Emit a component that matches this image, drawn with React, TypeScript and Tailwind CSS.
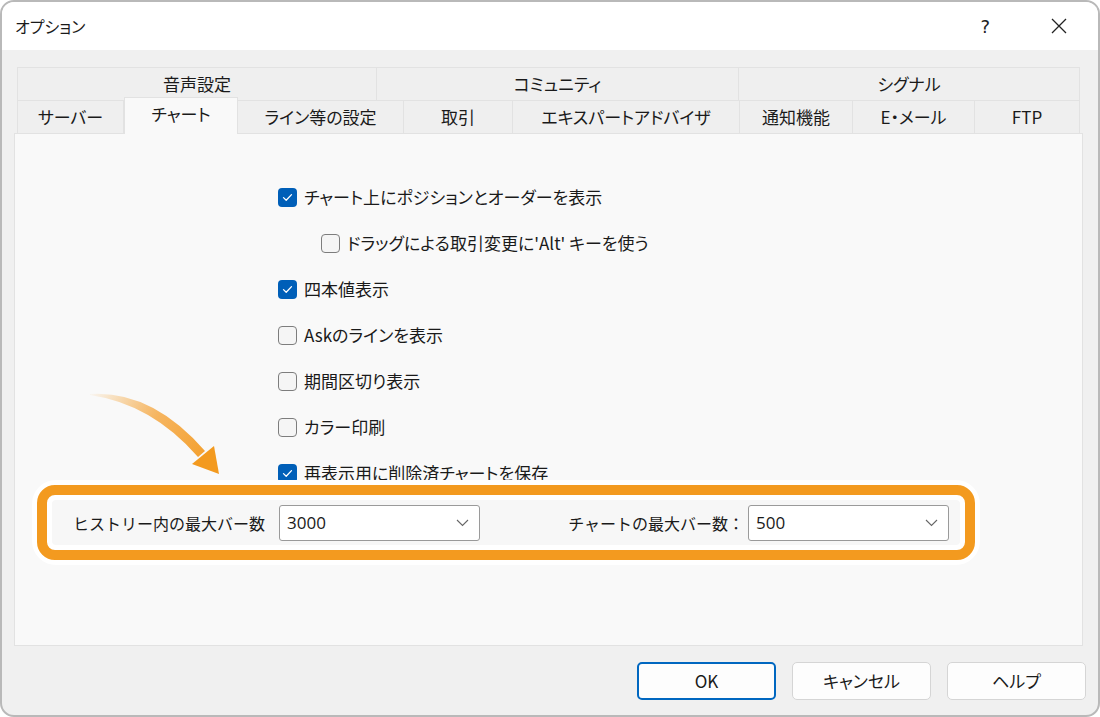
import React from "react";

const JP = "font-['Noto_Sans_CJK_JP','Noto_Sans',sans-serif]";

function CheckBox({ checked }: { checked: boolean }) {
  if (checked) {
    return (
      <span className="flex h-[19px] w-[19px] items-center justify-center rounded-[4px] bg-[#005fb8]">
        <svg width="11" height="9" viewBox="0 0 11 9" fill="none">
          <path d="M1.5 4.6 L4.2 7.2 L9.5 1.6" stroke="white" strokeWidth="1.3" strokeLinecap="round" strokeLinejoin="round" />
        </svg>
      </span>
    );
  }
  return <span className="h-[19px] w-[19px] rounded-[4px] border border-[#7d7d7d] bg-[#f5f5f5]" />;
}

function Row({ checked, label, indent }: { checked: boolean; label: string; indent?: boolean }) {
  return (
    <div className={`flex h-[46px] items-center gap-[7px] ${indent ? "pl-[43px]" : ""}`}>
      <CheckBox checked={checked} />
      <span className="text-[17px] text-[#1a1a1a] [font-feature-settings:'palt']">{label}</span>
    </div>
  );
}

function Select({ value }: { value: string }) {
  return (
    <div className="flex h-[36px] w-[201px] items-center justify-between rounded-[3px] border border-[#9a9a9a] bg-white pl-[7px] pr-[10px]">
      <span className="font-['Open_Sans',sans-serif] text-[17px] text-[#1a1a1a]">{value}</span>
      <svg width="13" height="8" viewBox="0 0 13 8" fill="none">
        <path d="M1 1 L6.5 6.5 L12 1" stroke="#666" strokeWidth="1.1" />
      </svg>
    </div>
  );
}

export default function App() {
  const topTabs = [
    { t: "音声設定", w: "w-[360px]" },
    { t: "コミュニティ", w: "w-[362px]" },
    { t: "シグナル", w: "w-[341px]" },
  ];
  const bottomTabs = [
    { t: "サーバー", w: "w-[107px]" },
    { t: "チャート", w: "w-[114px]", sel: true },
    { t: "ライン等の設定", w: "w-[166px]" },
    { t: "取引", w: "w-[109px]" },
    { t: "エキスパートアドバイザ", w: "w-[227px]" },
    { t: "通知機能", w: "w-[113px]" },
    { t: "E・メール", w: "w-[122px]" },
    { t: "FTP", w: "w-[105px]" },
  ];
  return (
    <div className={`h-[717px] w-[1100px] bg-white ${JP}`}>
      <div className="relative flex h-[717px] w-[1100px] flex-col overflow-hidden rounded-[14px] border-2 border-[#b9b9b9] bg-[#f0f0f0]">
        {/* title bar */}
        <div className="flex h-[48px] shrink-0 items-center bg-white pl-[13px]">
          <span className="text-[16px] text-[#1a1a1a] [font-feature-settings:'palt']">オプション</span>
          <span className="ml-auto mr-[60px] font-['DejaVu_Sans',sans-serif] text-[18px] text-[#222]">?</span>
          <svg className="mr-[30px]" width="18" height="18" viewBox="0 0 18 18">
            <path d="M2 2 L16 16 M16 2 L2 16" stroke="#222" strokeWidth="1.3" />
          </svg>
        </div>
        {/* body */}
        <div className="ml-[12px] mt-[17px] w-[1069px]">
          {/* tabs */}
          <div className="ml-[3px]">
            <div className="flex h-[33px]">
              {topTabs.map((t, i) => (
                <div
                  key={t.t}
                  className={`flex ${t.w} items-center justify-center border-t border-r border-[#e2e2e2] ${i === 0 ? "border-l" : ""} bg-[#efefef] text-[17px] text-[#1a1a1a] [font-feature-settings:'palt']`}
                >
                  {t.t}
                </div>
              ))}
            </div>
            <div className="flex h-[33px] items-end">
              {bottomTabs.map((t, i) =>
                t.sel ? (
                  <div
                    key={t.t}
                    className={`relative z-10 -mb-[1px] flex h-[37px] ${t.w} items-center justify-center border-x border-t border-[#e2e2e2] bg-[#f9f9f9] pb-[4px] text-[17px] text-[#1a1a1a] [font-feature-settings:'palt']`}
                  >
                    {t.t}
                  </div>
                ) : (
                  <div
                    key={t.t}
                    className={`flex h-[33px] ${t.w} items-center justify-center border-t border-r border-[#e2e2e2] ${i === 0 ? "border-l" : ""} bg-[#efefef] text-[17px] text-[#1a1a1a] [font-feature-settings:'palt']`}
                  >
                    {t.t}
                  </div>
                )
              )}
            </div>
          </div>
          {/* panel */}
          <div className="h-[513px] border border-[#e2e2e2] bg-[#f9f9f9] pt-[40px]">
            <div className="pl-[263px]">
              <Row checked label="チャート上にポジションとオーダーを表示" />
              <Row checked={false} indent label="ドラッグによる取引変更に'Alt' キーを使う" />
              <Row checked label="四本値表示" />
              <Row checked={false} label="Askのラインを表示" />
              <Row checked={false} label="期間区切り表示" />
              <Row checked={false} label="カラー印刷" />
              <Row checked label="再表示用に削除済チャートを保存" />
            </div>
            {/* highlighted row */}
            <div className="relative z-10 ml-[17px] -mt-[16px] w-[948px] rounded-[24px] bg-white p-[5px]">
              <div className="rounded-[18px] border-[10px] border-[#f39a1f] bg-white p-[5px]">
                <div className="flex h-[45px] items-center rounded-[4px] bg-[#f7f7f7] pl-[21px] pr-[11px]">
                  <span className="text-[16px] text-[#1a1a1a]">ヒストリー内の最大バー数</span>
                  <div className="ml-[14px]">
                    <Select value="3000" />
                  </div>
                  <span className="ml-auto text-[16px] text-[#1a1a1a]">チャートの最大バー数：</span>
                  <div className="ml-[4px]">
                    <Select value="500" />
                  </div>
                </div>
              </div>
            </div>
          </div>
        </div>
        {/* buttons */}
        <div className="mr-[12px] mt-[16px] flex justify-end gap-[16px]">
          <button className="h-[38px] w-[139px] rounded-[5px] border-2 border-[#0067c0] bg-[#fdfdfd] text-[17px] text-[#1a1a1a]">OK</button>
          <button className="h-[38px] w-[139px] rounded-[5px] border border-[#d5d5d5] bg-[#fdfdfd] text-[17px] text-[#1a1a1a] [font-feature-settings:'palt']">キャンセル</button>
          <button className="h-[38px] w-[139px] rounded-[5px] border border-[#d5d5d5] bg-[#fdfdfd] text-[17px] text-[#1a1a1a] [font-feature-settings:'palt']">ヘルプ</button>
        </div>
        {/* annotation arrow */}
        <svg className="pointer-events-none absolute left-0 top-0" width="1100" height="717" viewBox="0 0 1100 717">
          <defs>
            <linearGradient id="ag" x1="90" y1="392" x2="215" y2="470" gradientUnits="userSpaceOnUse">
              <stop offset="0" stopColor="#f39a1f" stopOpacity="0.05" />
              <stop offset="0.45" stopColor="#f5a43a" stopOpacity="0.8" />
              <stop offset="1" stopColor="#f39a1f" />
            </linearGradient>
          </defs>
          <path d="M88 392 Q150 388 203 449 L196 455 Q150 402 88 393 Z" fill="url(#ag)" />
          <path d="M190 462 L212 444 L217 472 Z" fill="#f39a1f" />
        </svg>
      </div>
    </div>
  );
}
